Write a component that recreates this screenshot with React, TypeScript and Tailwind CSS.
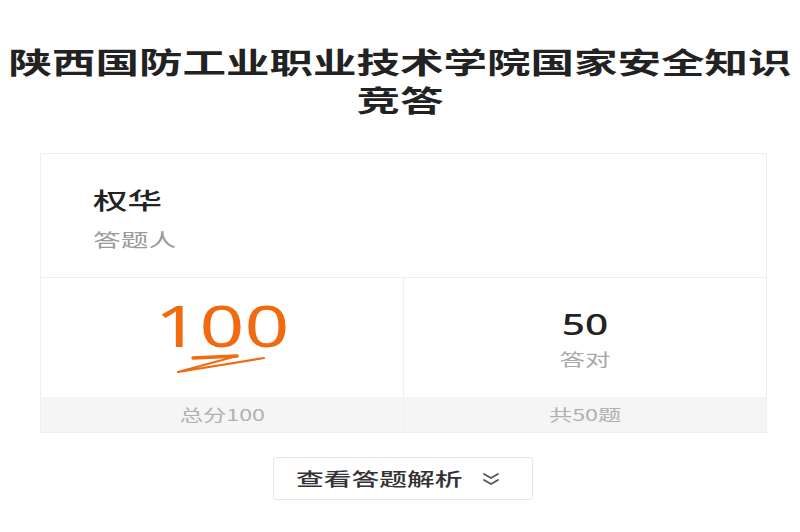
import React from "react";

const cjk = "font-['Noto_Sans_CJK_SC','Noto_Sans',sans-serif]";

function S({ children, className = "" }: { children: React.ReactNode; className?: string }) {
  return <span className={`inline-block ${className}`}>{children}</span>;
}

export default function App() {
  return (
    <div className={`w-[800px] h-[532px] bg-white overflow-hidden flex flex-col ${cjk}`}>
      <div className="pt-[42px] flex flex-col items-center text-[29px] leading-[38px] font-bold text-[#222]">
        <S className="scale-x-[1.5] whitespace-nowrap">陕西国防工业职业技术学院国家安全知识</S>
        <S className="scale-x-[1.5] whitespace-nowrap">竞答</S>
      </div>

      <div className="ml-[40px] mt-[35px] w-[727px] border border-[#efefef] flex flex-col">
        <div className="h-[124px] border-b border-[#efefef] pl-[52px] pt-[30px] flex flex-col">
          <S className="origin-left scale-x-[1.5] text-[23px] leading-[30px] font-medium text-[#222] w-fit">权华</S>
          <S className="origin-left scale-x-[1.5] text-[18.5px] leading-[24px] mt-[13px] text-[#9a9a9a] w-fit">答题人</S>
        </div>
        <div className="flex">
          <div className="w-[363px] border-r border-[#efefef] flex flex-col">
            <div className="h-[119px] flex flex-col items-center pt-[18px]">
              <S className="scale-x-[1.4] font-['Noto_Sans',sans-serif] font-normal text-[56px] leading-[58px] text-[#f26a10]">100</S>
              <svg width="100" height="26" viewBox="0 0 100 26" className="-mt-[4px]">
                <path d="M21 8 L65 6" fill="none" stroke="#f26a10" strokeWidth="3.5" strokeLinecap="round" />
                <path
                  d="M65 6 L6 22 L92 8"
                  fill="none"
                  stroke="#f26a10"
                  strokeWidth="2.2"
                  strokeLinecap="round"
                  strokeLinejoin="round"
                />
              </svg>
            </div>
            <div className="h-[35px] bg-[#f5f5f5] flex items-center justify-center">
              <S className="scale-x-[1.5] text-[15.5px] text-[#b0b0b0]">总分100</S>
            </div>
          </div>
          <div className="flex-1 flex flex-col">
            <div className="h-[119px] flex flex-col items-center pt-[29px]">
              <S className="scale-x-[1.45] font-['Noto_Sans',sans-serif] font-medium text-[28px] leading-[34px] text-[#222]">50</S>
              <S className="scale-x-[1.5] text-[17px] leading-[22px] mt-[7px] text-[#a8a8a8]">答对</S>
            </div>
            <div className="h-[35px] bg-[#f5f5f5] flex items-center justify-center">
              <S className="scale-x-[1.5] text-[15.5px] text-[#b0b0b0]">共50题</S>
            </div>
          </div>
        </div>
      </div>

      <div className="ml-[273px] mt-[24px] w-[260px] h-[43px] border border-[#e6e6e6] rounded-[3px] flex items-center pl-[22px]">
        <S className="origin-left scale-x-[1.5] text-[18.5px] font-medium text-[#333] whitespace-nowrap">查看答题解析</S>
        <svg width="20" height="16" viewBox="0 0 20 16" className="ml-[74px]">
          <path d="M3 3 L10 7 L17 3 M3 9 L10 13 L17 9" fill="none" stroke="#555" strokeWidth="1.8" strokeLinecap="round" strokeLinejoin="round" />
        </svg>
      </div>
    </div>
  );
}
